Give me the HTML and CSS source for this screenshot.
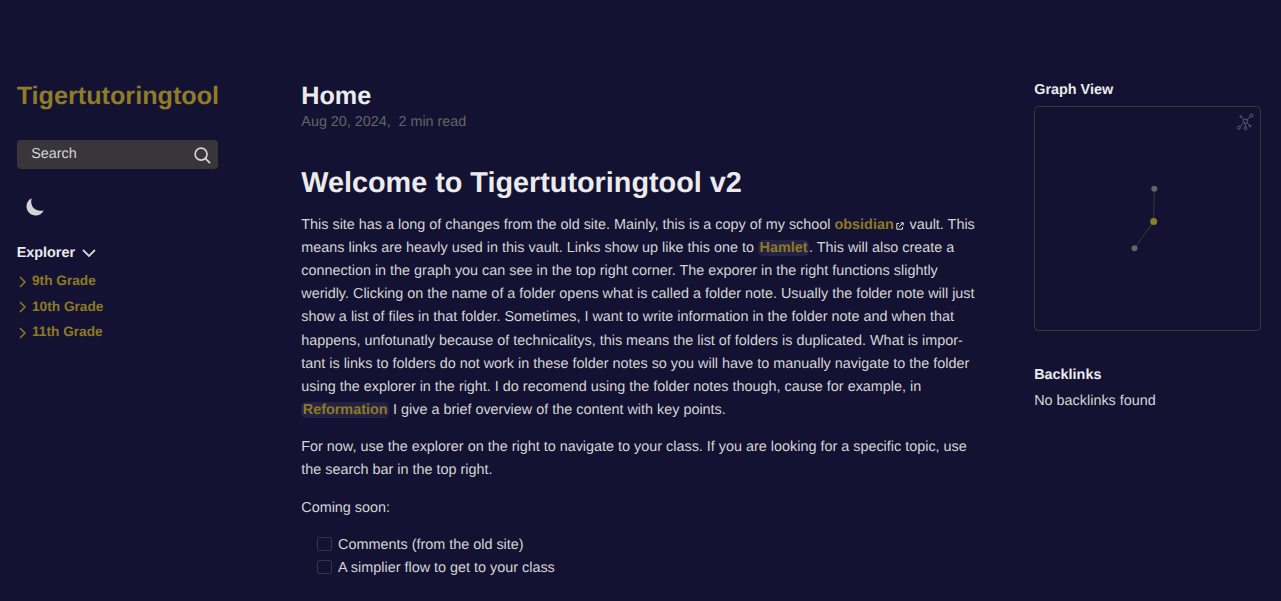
FILE: index.html
```html
<!DOCTYPE html>
<html lang="en">
<head>
<meta charset="utf-8">
<title>Home</title>
<link rel="stylesheet" href="styles.css">
</head>
<body>
<div class="page">
  <aside class="left">
    <h2 class="site-title">Tigertutoringtool</h2>
    <div class="search">
      <span>Search</span>
      <svg class="search-icon" viewBox="0 0 18 18"><circle cx="7.5" cy="7.5" r="6.3"/><path d="M12 12 17 17"/></svg>
    </div>
    <svg class="moon" viewBox="0 0 18 18"><path d="M5.6.3C2.600 1.600.500 4.700.500 8.300c0 5.100 4.100 9.200 9.200 9.200 3.500 0 6.600-2 8-5-5 .800-9.400-.400-11.400-4.200C5 5.700 5 3 5.600.3Z"/></svg>
    <div class="explorer">
      <h3>Explorer</h3>
      <svg class="chevron-down" viewBox="0 0 14 8"><path d="M1 1 7 7 13 1"/></svg>
    </div>
    <ul class="folders">
      <li><svg viewBox="0 0 7 12"><path d="M1 1 6 6 1 11"/></svg><a>9th Grade</a></li>
      <li><svg viewBox="0 0 7 12"><path d="M1 1 6 6 1 11"/></svg><a>10th Grade</a></li>
      <li><svg viewBox="0 0 7 12"><path d="M1 1 6 6 1 11"/></svg><a>11th Grade</a></li>
    </ul>
  </aside>
  <main class="center">
    <h1 class="article-title">Home</h1>
    <p class="meta">Aug 20, 2024,&nbsp; 2 min read</p>
    <h1 class="welcome">Welcome to Tigertutoringtool v2</h1>
    <p>This site has a long of changes from the old site. Mainly, this is a copy of my school <a>obsidian<svg class="external" viewBox="0 0 8 8"><path d="M3 1.500H.800V7.200H6.500V5M4.500.800H7.200V3.500M7.200.800 3.200 4.800"/></svg></a> vault. This<br>
    means links are heavly used in this vault. Links show up like this one to <a class="internal">Hamlet</a>. This will also create a<br>
    connection in the graph you can see in the top right corner. The exporer in the right functions slightly<br>
    weridly. Clicking on the name of a folder opens what is called a folder note. Usually the folder note will just<br>
    show a list of files in that folder. Sometimes, I want to write information in the folder note and when that<br>
    happens, unfotunatly because of technicalitys, this means the list of folders is duplicated. What is impor-<br>
    tant is links to folders do not work in these folder notes so you will have to manually navigate to the folder<br>
    using the explorer in the right. I do recomend using the folder notes though, cause for example, in<br>
    <a class="internal">Reformation</a> I give a brief overview of the content with key points.</p>
    <p>For now, use the explorer on the right to navigate to your class. If you are looking for a specific topic, use<br>
    the search bar in the top right.</p>
    <p>Coming soon:</p>
    <ul class="tasks">
      <li><span class="box"></span>Comments (from the old site)</li>
      <li><span class="box"></span>A simplier flow to get to your class</li>
    </ul>
  </main>
  <aside class="right">
    <h3>Graph View</h3>
    <div class="graph">
      <svg viewBox="0 0 225 223">
        <path class="edge" d="M119.300 81.700 118.700 114.500 99.500 141.300"/>
        <circle class="node" cx="119.300" cy="81.700" r="3"/>
        <circle class="node" cx="99.500" cy="141.300" r="3"/>
        <circle class="node current" cx="118.700" cy="114.500" r="3.500"/>
        <g class="global" transform="translate(202 6.500)">
          <circle cx="8.300" cy="7.700" r="2.100"/><circle cx="14.500" cy="2" r="1.500"/><circle cx="1.900" cy="14.200" r="1.500"/><circle cx="8.500" cy="14.900" r="1.400"/><circle cx="3.800" cy="3" r=".9"/><circle cx="13" cy="12.500" r=".9"/>
          <path d="M9.800 6.300 13.400 3M6.800 9.100 3 13.200M8.400 9.700V13.500M6.900 6.200 4.300 3.500M9.800 9.200 12.500 12"/>
        </g>
      </svg>
    </div>
    <h3 class="backlinks-title">Backlinks</h3>
    <p class="backlinks">No backlinks found</p>
  </aside>
</div>
</body>
</html>
```
FILE: styles.css
```css
* { box-sizing: border-box; }
body {
  margin: 0;
  height: 601px;
  overflow: hidden;
  background: #141233;
  color: #d4d4d4;
  font: 14.4px/23.04px "Liberation Sans", Arial, sans-serif;
  text-rendering: geometricPrecision;
}
h1, h2, h3, p, ul { margin: 0; padding: 0; }
h1, h2, h3 { color: #ebebec; }
h3 { font-size: 14.4px; line-height: 18px; }
ul { list-style: none; }
svg { display: block; fill: none; stroke: currentColor; }
a { color: #8d7a23; font-weight: 700; }
.page {
  display: grid;
  grid-template-columns: 284.6px 1fr 226.8px;
  padding: 81px 20px 0 16.7px;
}
.left { width: 201.5px; }
.site-title { color: #8f7c26; font-size: 25.2px; line-height: 30px; white-space: nowrap; }
.search {
  display: flex;
  align-items: center;
  justify-content: space-between;
  height: 29px;
  margin-top: 29px;
  padding: 0 7px 0 14.5px;
  border-radius: 4px;
  background: #393639;
}
.search-icon { width: 17px; height: 17px; margin-top: 1px; stroke-width: 1.8; }
.moon { width: 18px; height: 18px; margin: 29px 0 0 9.300px; fill: #d4d4d4; stroke: none; }
.explorer { display: flex; align-items: center; gap: 6.700px; margin-top: 28px; }
.chevron-down { width: 14px; height: 8px; margin-bottom: 1px; stroke-width: 1.8; }
.folders { margin-top: 6px; font-size: 13.68px; line-height: 25.5px; }
.folders li { display: flex; align-items: center; gap: 6px; padding-left: 2.300px; color: #8d7a23; }
.folders svg { width: 7px; height: 12px; margin-top: 2px; stroke-width: 1.5; }
.center { white-space: nowrap; }
.center p + p { margin-top: 14.4px; }
.article-title { font-size: 25.2px; line-height: 30px; }
.center .meta { color: #646464; margin-top: 0; word-spacing: -.1px; }
.welcome { margin: 32.04px 0 14.22px; font-size: 28.8px; line-height: 34px; }
.internal { padding: 0 1.5px; border-radius: 5px; background: #232246; }
.external { display: inline-block; width: 8px; height: 8px; margin: 0 1.600px 0 2.200px; color: #e4e4e6; vertical-align: -1px; }
.tasks { margin-top: 14.4px; padding-left: 15.6px; }
.tasks li { display: flex; align-items: center; gap: 6.200px; }
.box { width: 15px; height: 14px; margin-bottom: 4px; border: 1px solid #37343a; border-radius: 2px; }
.graph { height: 225px; margin-top: 7px; border: 1px solid #393639; border-radius: 4.5px; }
.graph svg { width: 225px; height: 223px; }
.edge { stroke: #393639; }
.node { fill: #646464; stroke: none; }
.current { fill: #8f7c26; }
.global { stroke: #65637b; stroke-width: .9; }
.backlinks-title { margin-top: 35px; }
.backlinks { margin-top: 6px; }
```
